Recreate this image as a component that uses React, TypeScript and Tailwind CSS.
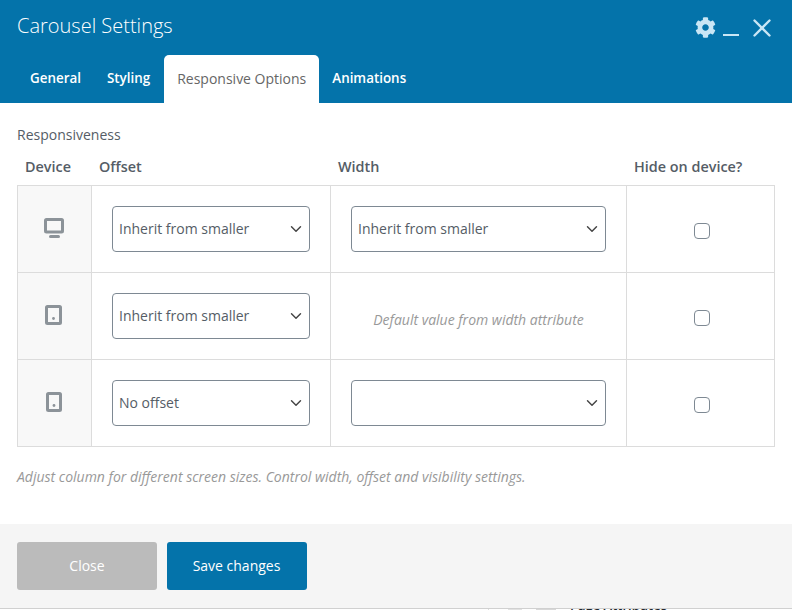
import { ChevronDown, X } from 'lucide-react';
import { FaCog } from 'react-icons/fa';

const blue = 'bg-[#0473aa]';

function Select({ value, wide }: { value: string; wide?: boolean }) {
  return (
    <div
      className={`flex h-[46px] items-center justify-between rounded-[4px] border border-[#7e8993] bg-white pl-[6px] pr-[4px] text-[14px] text-[#555d66] ${
        wide ? 'w-[255px]' : 'w-[198px]'
      }`}
    >
      <span className="pb-[2px]">{value}</span>
      <ChevronDown size={18} strokeWidth={1.9} className="text-[#444]" />
    </div>
  );
}

function Check() {
  return <div className="h-4 w-4 rounded-[4px] border border-[#7e8993] bg-white" />;
}

function DesktopIcon() {
  return (
    <svg width="20" height="20" viewBox="0 0 20 20" fill="none">
      <rect x="1.5" y="1.5" width="17" height="12.5" rx="1" stroke="#8c9399" strokeWidth="3" />
      <rect x="5" y="17" width="11" height="3" rx="1.5" fill="#8c9399" />
    </svg>
  );
}

function TabletIcon({ narrow }: { narrow?: boolean }) {
  const w = narrow ? 16 : 17;
  return (
    <svg width={w} height="20" viewBox={`0 0 ${w} 20`} fill="none">
      <rect x="1.5" y="1.5" width={w - 3} height="17" rx="1" stroke="#8c9399" strokeWidth="3" />
      <circle cx={w / 2} cy="13.5" r="1.4" fill="#8c9399" />
    </svg>
  );
}

function Row({
  icon,
  offset,
  width,
  note,
}: {
  icon: React.ReactNode;
  offset: string;
  width?: string;
  note?: boolean;
}) {
  return (
    <div className="grid h-[87px] grid-cols-[74px_239px_296px_1fr] border-b border-[#dcdcdc]">
      <div className="flex items-center justify-center border-r border-[#dcdcdc] bg-[#f8f8f8] pb-[3px] pr-[2px]">{icon}</div>
      <div className="flex items-center justify-center border-r border-[#dcdcdc]">
        <Select value={offset} />
      </div>
      <div className="flex items-center justify-center border-r border-[#dcdcdc]">
        {note ? (
          <span className="pt-[7px] text-[14px] italic text-[#999]">Default value from width attribute</span>
        ) : (
          <Select value={width ?? ''} wide />
        )}
      </div>
      <div className="flex items-center justify-center pl-[2px] pt-[3px]">
        <Check />
      </div>
    </div>
  );
}

export default function App() {
  return (
    <div className="flex h-[610px] w-[792px] flex-col overflow-hidden bg-white font-['Open_Sans',sans-serif]">
      <header className={`${blue} h-[103px] shrink-0 px-[17px] text-white`}>
        <div className="flex h-[55px] items-center justify-between">
          <h1 className="pb-[3px] text-[20px] font-light leading-none">Carousel Settings</h1>
          <div className="mr-[5px] flex items-center">
            <FaCog size={21} color="#c9e6f5" />
            <div className="ml-[7px] mt-[15px] h-[2px] w-[16px] bg-[#c9e6f5]" />
            <X size={30} stroke="#c9e6f5" strokeWidth={1.9} className="ml-[8px] mr-[-7px]" />
          </div>
        </div>
        <nav className="flex h-[48px] items-stretch text-[13.4px] font-semibold">
          <span className="flex items-center px-[13px] pb-[1px]">General</span>
          <span className="flex items-center pl-[13px] pr-[14px] pb-[1px]">Styling</span>
          <span className="flex items-center rounded-t-[5px] bg-white px-[13px] pb-[1px] text-[14px] font-normal text-[#666]">
            Responsive Options
          </span>
          <span className="flex items-center px-[13px] pb-[1px]">Animations</span>
        </nav>
      </header>

      <main className="flex-1 px-[17px] pt-[23px] text-[#555d66]">
        <div className="text-[14px] font-normal leading-[18px]">Responsiveness</div>
        <div className="mt-[4px] grid h-[37px] grid-cols-[74px_239px_296px_1fr] items-center text-[14.4px] font-semibold">
          <span className="pl-[8px]">Device</span>
          <span className="pl-[8px]">Offset</span>
          <span className="pl-[8px]">Width</span>
          <span className="pl-[8px]">Hide on device?</span>
        </div>
        <div className="border-x border-t border-[#dcdcdc]">
          <Row icon={<DesktopIcon />} offset="Inherit from smaller" width="Inherit from smaller" />
          <Row icon={<TabletIcon />} offset="Inherit from smaller" note />
          <Row icon={<TabletIcon narrow />} offset="No offset" />
        </div>
        <p className="mt-[21px] text-[14px] italic leading-[18px] text-[#999]">
          Adjust column for different screen sizes. Control width, offset and visibility settings.
        </p>
      </main>

      <footer className="flex h-[84px] shrink-0 gap-[10px] bg-[#f5f5f5] px-[17px] pt-[18px]">
        <button className="h-[48px] w-[140px] rounded-[3px] bg-[#bbbbbb] pb-[1px] text-[14px] font-medium text-white">
          Close
        </button>
        <button className={`${blue} h-[48px] w-[140px] rounded-[3px] pb-[1px] pr-[1px] text-[14px] font-medium text-white`}>
          Save changes
        </button>
      </footer>
      <div className="relative h-[2px] shrink-0 overflow-hidden border-t border-[#d0d0d0] bg-white">
        <div className="absolute left-[488px] top-0 h-[2px] w-[1px] bg-[#ddd]" />
        <div className="absolute left-[508px] top-0 h-[2px] w-[14px] bg-[#e2e2e2]" />
        <div className="absolute left-[536px] top-0 h-[2px] w-[20px] bg-[#d8d8d8]" />
        <span className="absolute left-[570px] top-[-12px] text-[13px] font-semibold leading-[16px] text-[#23282d]">
          Page Attributes
        </span>
      </div>
    </div>
  );
}
